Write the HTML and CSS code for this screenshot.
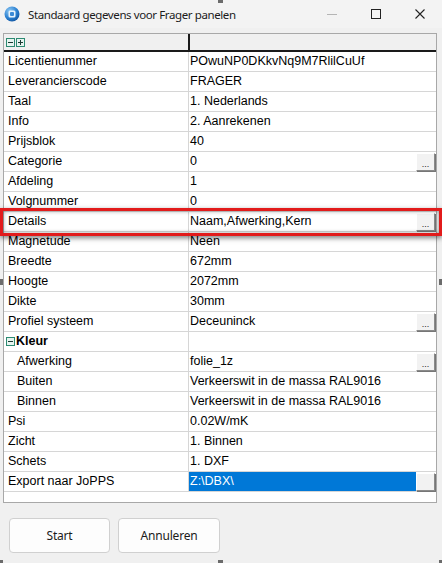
FILE: index.html
```html
<!DOCTYPE html>
<html lang="nl">
  <head>
    <meta charset="UTF-8" />
    <meta name="viewport" content="width=device-width, initial-scale=1.0" />
    <title>Standaard gegevens voor Frager panelen</title>
    <link rel="stylesheet" href="styles.css">
  </head>
  <body>
    <div class="titlebar">
      <svg class="app-icon" viewBox="0 0 16 16" width="16" height="16">
        <defs>
          <radialGradient id="ball" cx="0.35" cy="0.3" r="0.8">
            <stop offset="0" stop-color="#8cc8f4" />
            <stop offset="0.6" stop-color="#2a7fd0" />
            <stop offset="1" stop-color="#0f4f9a" />
          </radialGradient>
        </defs>
        <circle cx="8" cy="8" r="7.5" fill="url(#ball)" />
        <rect x="4.5" y="4.5" width="7" height="7" rx="1.5" fill="#e8f3fc" />
        <rect x="6" y="6" width="4" height="4" rx="1" fill="#3b8ad6" />
      </svg>
      <span class="title">Standaard gegevens voor Frager panelen</span>
      <div class="win-controls">
        <div class="win-btn"><span class="min-line"></span></div>
        <div class="win-btn"><span class="max-box"></span></div>
        <div class="win-btn">
          <svg viewBox="0 0 10 10" width="10" height="10">
            <path d="M0.5 0.5 L9.5 9.5 M9.5 0.5 L0.5 9.5" stroke="#222" stroke-width="1.1" fill="none" />
          </svg>
        </div>
      </div>
    </div>

    <div class="content">
      <div class="grid">
        <div class="grid-head">
          <div class="head-name">
            <svg class="tree-box" viewBox="0 0 9 9" width="9" height="9">
              <rect x="0.5" y="0.5" width="8" height="8" fill="#e6f4ef" stroke="#2c8a72" />
              <path d="M2 4.5 H7" stroke="#1b3b33" />
            </svg>
            <svg class="tree-box" viewBox="0 0 9 9" width="9" height="9">
              <rect x="0.5" y="0.5" width="8" height="8" fill="#e6f4ef" stroke="#2c8a72" />
              <path d="M2 4.5 H7 M4.5 2 V7" stroke="#1b3b33" />
            </svg>
          </div>
          <div class="head-value"></div>
        </div>

        <div class="row"><div class="name">Licentienummer</div><div class="value">POwuNP0DKkvNq9M7RlilCuUf</div></div>
        <div class="row"><div class="name">Leverancierscode</div><div class="value">FRAGER</div></div>
        <div class="row"><div class="name">Taal</div><div class="value">1. Nederlands</div></div>
        <div class="row"><div class="name">Info</div><div class="value">2. Aanrekenen</div></div>
        <div class="row"><div class="name">Prijsblok</div><div class="value">40</div></div>
        <div class="row"><div class="name">Categorie</div><div class="value"><span class="val-text">0</span><span class="dots">...</span></div></div>
        <div class="row"><div class="name">Afdeling</div><div class="value">1</div></div>
        <div class="row"><div class="name">Volgnummer</div><div class="value">0</div></div>
        <div class="row"><div class="name">Details</div><div class="value"><span class="val-text">Naam,Afwerking,Kern</span><span class="dots">...</span></div></div>
        <div class="row"><div class="name">Magnetude</div><div class="value">Neen</div></div>
        <div class="row"><div class="name">Breedte</div><div class="value">672mm</div></div>
        <div class="row"><div class="name">Hoogte</div><div class="value">2072mm</div></div>
        <div class="row"><div class="name">Dikte</div><div class="value">30mm</div></div>
        <div class="row"><div class="name">Profiel systeem</div><div class="value"><span class="val-text">Deceuninck</span><span class="dots">...</span></div></div>
        <div class="row">
          <div class="name group">
            <svg class="tree-box" viewBox="0 0 9 9" width="9" height="9">
              <rect x="0.5" y="0.5" width="8" height="8" fill="#e6f4ef" stroke="#2c8a72" />
              <path d="M2 4.5 H7" stroke="#1b3b33" />
            </svg>
            <b>Kleur</b>
          </div>
          <div class="value"></div>
        </div>
        <div class="row"><div class="name sub">Afwerking</div><div class="value"><span class="val-text">folie_1z</span><span class="dots">...</span></div></div>
        <div class="row"><div class="name sub">Buiten</div><div class="value">Verkeerswit in de massa RAL9016</div></div>
        <div class="row"><div class="name sub">Binnen</div><div class="value">Verkeerswit in de massa RAL9016</div></div>
        <div class="row"><div class="name">Psi</div><div class="value">0.02W/mK</div></div>
        <div class="row"><div class="name">Zicht</div><div class="value">1. Binnen</div></div>
        <div class="row"><div class="name">Schets</div><div class="value">1. DXF</div></div>
        <div class="row"><div class="name">Export naar JoPPS</div><div class="value"><span class="val-text selected">Z:\DBX\</span><span class="dots"></span></div></div>

        <div class="grid-fill"></div>
      </div>
    </div>

    <div class="footer">
      <button class="dlg-btn">Start</button>
      <button class="dlg-btn">Annuleren</button>
    </div>

    <div class="highlight"></div>

    <span class="handle h-top"></span>
    <span class="handle h-left"></span>
    <span class="handle h-right"></span>
    <span class="handle h-bottom"></span>
    <span class="handle h-bl"></span>
    <span class="handle h-br"></span>
  </body>
</html>
```

FILE: styles.css
```css
* {
  box-sizing: border-box;
  margin: 0;
  padding: 0;
}

body {
  font-family: "Liberation Sans", Arial, sans-serif;
  font-size: 12.5px;
  color: #000;
  background: #f0f0f0;
  width: 442px;
  height: 563px;
  overflow: hidden;
  position: relative;
}

/* window title */
.titlebar {
  height: 28px;
  display: flex;
  align-items: center;
  padding-left: 4px;
  background: #f3f3f3;
}

.app-icon {
  flex: none;
}

.title {
  flex: 1;
  margin-left: 8px;
  font-family: "Noto Sans", "Open Sans", sans-serif;
  font-size: 11.5px;
  letter-spacing: -0.4px;
  color: #1b1b1b;
}

.win-controls {
  display: flex;
}

.win-btn {
  width: 44px;
  height: 28px;
  display: flex;
  align-items: center;
  justify-content: center;
}

.min-line {
  width: 10px;
  height: 1px;
  background: #b5b5b5;
}

.max-box {
  width: 10px;
  height: 10px;
  border: 1px solid #222;
}

/* property grid */
.content {
  padding: 5px 5px 0 3px;
}

.grid {
  width: 434px;
  border: 1px solid #a8a8a8;
  background: #fff;
}

.grid-head {
  height: 18px;
  display: grid;
  grid-template-columns: 184px 1fr;
  background: #f0f0f0;
  border-bottom: 2px solid #1a1a1a;
}

.head-name {
  display: flex;
  align-items: center;
  gap: 1px;
  padding-left: 2px;
}

.head-value {
  border-left: 2px solid #1a1a1a;
}

.row {
  height: 20px;
  display: grid;
  grid-template-columns: 184px 1fr;
  border-bottom: 1px solid #d6d6d6;
  line-height: 19px;
}

.name {
  padding-left: 4px;
  white-space: nowrap;
}

.name.sub {
  padding-left: 13px;
}

.name.group {
  display: flex;
  align-items: center;
  gap: 1px;
  padding-left: 2px;
}

.name.group b {
  font-weight: bold;
}

.value {
  display: flex;
  border-left: 1px solid #d6d6d6;
  padding-left: 1px;
  white-space: nowrap;
}

.val-text {
  flex: 1;
}

.val-text.selected {
  background: #0078d7;
  color: #fff;
  margin-left: -1px;
  padding-left: 1px;
}

.dots {
  width: 19px;
  height: 18px;
  margin-top: 1px;
  margin-right: 1px;
  background: #f2f2f2;
  border: 1px solid;
  border-color: #ffffff #8a8a8a #8a8a8a #ffffff;
  box-shadow: 1px 1px 0 #767676;
  font-size: 9px;
  line-height: 20px;
  text-align: center;
  color: #222;
}

.grid-fill {
  height: 10px;
}

/* buttons */
.footer {
  display: flex;
  gap: 8px;
  padding: 15px 0 0 9px;
}

.dlg-btn {
  width: 101px;
  height: 35px;
  background: #fdfdfd;
  border: 1px solid #d0d0d0;
  border-radius: 4px;
  font-family: "Noto Sans", "Open Sans", sans-serif;
  font-size: 12px;
  letter-spacing: -0.2px;
  color: #1b1b1b;
}

.dlg-btn + .dlg-btn {
  width: 102px;
}

/* annotation over the Details row */
.highlight {
  position: absolute;
  left: 0;
  top: 208px;
  width: 442px;
  height: 28px;
  border: 3px solid #e21b1b;
  box-shadow: 0 2px 5px rgba(0, 0, 0, 0.5), inset 0 0 4px rgba(0, 0, 0, 0.4);
}

/* capture handles of the screenshot tool */
.handle {
  position: absolute;
  background: #6b6b6b;
}

.h-top {
  left: 218px;
  top: 0;
  width: 5px;
  height: 3px;
}

.h-bottom {
  left: 218px;
  top: 560px;
  width: 5px;
  height: 3px;
}

.h-left {
  left: 0;
  top: 279px;
  width: 3px;
  height: 6px;
}

.h-right {
  left: 439px;
  top: 279px;
  width: 3px;
  height: 6px;
}

.h-bl {
  left: 0;
  top: 560px;
  width: 3px;
  height: 3px;
}

.h-br {
  left: 439px;
  top: 560px;
  width: 3px;
  height: 3px;
}
```
